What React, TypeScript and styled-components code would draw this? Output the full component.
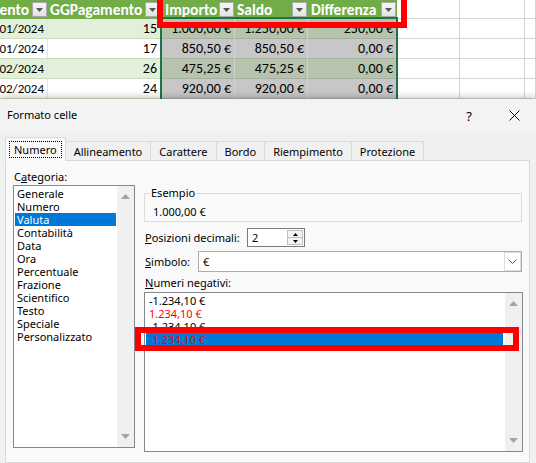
import React from "react";
import styled, { createGlobalStyle } from "styled-components";

const GlobalStyle = createGlobalStyle`
  html, body { margin: 0; padding: 0; }
  body { width: 536px; height: 463px; overflow: hidden; background: #f0f0f0; }
  * { box-sizing: border-box; }
`;

type Tone = "band" | "plain" | "selBand" | "selPlain" | "grid";

const toneBg: Record<Tone, string> = {
  band: "#e2efda",
  plain: "#ffffff",
  selBand: "#b7c3ac",
  selPlain: "#c7c7c7",
  grid: "#ffffff",
};

const toneLine: Record<Tone, string> = {
  band: "#c9dcbc",
  plain: "#c9dcbc",
  selBand: "#a7b19f",
  selPlain: "#a7b19f",
  grid: "#d4d4d4",
};

const toneSide: Record<Tone, string> = {
  band: "#e3e8df",
  plain: "#e3e8df",
  selBand: "#d0d4cc",
  selPlain: "#d0d4cc",
  grid: "#d4d4d4",
};

const Page = styled.div`
  position: relative;
  width: 536px;
  height: 463px;
  overflow: hidden;
  display: flex;
  flex-direction: column;
`;

const Sheet = styled.div`
  position: relative;
  display: grid;
  grid-template-columns: 48px 113px 74px 73px 89px 63px 65px 1fr;
  grid-template-rows: 19px repeat(4, 20px);
  font-family: Calibri, Carlito, Lato, sans-serif;
  font-size: 14px;
  color: #000;
  background: #fff;
  flex: none;
`;

const Cell = styled.div<{ $tone: Tone; $small?: boolean }>`
  display: flex;
  align-items: center;
  justify-content: flex-end;
  overflow: hidden;
  white-space: nowrap;
  padding: 0 3px 0 0;
  font-size: ${(p) => (p.$small ? 13 : 14)}px;
  background: ${(p) => toneBg[p.$tone]};
  border-bottom: 1px solid ${(p) => toneLine[p.$tone]};
  border-right: 1px solid ${(p) => toneSide[p.$tone]};
`;

const HeadCell = styled.div<{ $pad: number }>`
  display: flex;
  align-items: center;
  overflow: hidden;
  white-space: nowrap;
  padding: 0 1px 0 ${(p) => p.$pad}px;
  background: #70ad47;
  color: #fff;
  font-weight: 700;
  font-size: 15.5px;
`;

const HeadLabel = styled.div<{ $clipLeft?: boolean }>`
  flex: 1;
  min-width: 0;
  overflow: hidden;
  display: flex;
  justify-content: ${(p) => (p.$clipLeft ? "flex-end" : "flex-start")};
  padding-right: ${(p) => (p.$clipLeft ? 3 : 0)}px;
`;

const FilterButton = styled.div`
  flex: none;
  width: 15px;
  height: 15px;
  border: 1px solid #a9a9a9;
  background: linear-gradient(#f7f7f7, #e2e2e2);
  display: flex;
  align-items: center;
  justify-content: center;
`;

const SelectionFrame = styled.div`
  position: absolute;
  left: 160px;
  top: 17px;
  width: 238px;
  height: 86px;
  border: 2px solid #217346;
  z-index: 1;
  pointer-events: none;
`;

const Dialog = styled.div`
  position: relative;
  z-index: 2;
  flex: 1;
  display: flex;
  flex-direction: column;
  background: #f0f0f0;
  box-shadow: 0 -3px 6px rgba(0, 0, 0, 0.18);
  font-family: "Segoe UI", "Noto Sans", sans-serif;
  font-size: 11px;
  color: #000;
`;

const TitleBar = styled.div`
  height: 33px;
  display: flex;
  align-items: center;
  padding-left: 7px;
  background: #f3f3f3;
`;

const Title = styled.div`
  flex: 1;
  padding-bottom: 2px;
`;

const TitleButton = styled.div<{ $w: number }>`
  width: ${(p) => p.$w}px;
  height: 33px;
  display: flex;
  align-items: center;
  justify-content: center;
  font-size: 13px;
`;

const TabStrip = styled.div`
  position: relative;
  z-index: 1;
  height: 28px;
  display: flex;
  align-items: flex-end;
  padding-left: 5px;
`;

const Tab = styled.div<{ $active?: boolean }>`
  height: ${(p) => (p.$active ? 24 : 19)}px;
  margin-bottom: ${(p) => (p.$active ? -1 : 0)}px;
  margin-left: -1px;
  padding: 0 ${(p) => (p.$active ? 3 : 8)}px;
  display: flex;
  align-items: center;
  border: 1px solid #dadada;
  border-bottom: none;
  background: ${(p) => (p.$active ? "#f9f9f9" : "#f0f0f0")};
  &:first-child {
    margin-left: 0;
  }
`;

const FocusRect = styled.span`
  padding: 0 4px;
  line-height: 15px;
  border: 1px dotted #000;
`;

const Panel = styled.div`
  flex: 1;
  margin: 0 6px 0 5px;
  border: 1px solid #d9d9d9;
  background: #f9f9f9;
  display: grid;
  grid-template-columns: 122px 379px;
  column-gap: 9px;
  align-items: start;
  padding: 8px 6px 0 7px;
`;

const Column = styled.div`
  display: flex;
  flex-direction: column;
`;

const Label = styled.div<{ $w?: number; $indent?: number }>`
  flex: none;
  line-height: 16px;
  height: 16px;
  width: ${(p) => (p.$w ? `${p.$w}px` : "auto")};
  padding-left: ${(p) => p.$indent ?? 0}px;
  white-space: nowrap;
`;

const ListBox = styled.div<{ $h: number; $mt?: number }>`
  height: ${(p) => p.$h}px;
  margin-top: ${(p) => p.$mt ?? 0}px;
  border: 1px solid #828790;
  background: #fff;
  display: flex;
`;

const ListItems = styled.div<{ $top: number }>`
  flex: 1;
  padding-top: ${(p) => p.$top}px;
  overflow: hidden;
`;

const ListItem = styled.div<{ $selected?: boolean; $red?: boolean; $pad: number; $mr: number }>`
  height: 13px;
  line-height: 13px;
  margin: 0 ${(p) => p.$mr}px 0 1px;
  padding-left: ${(p) => p.$pad}px;
  white-space: nowrap;
  background: ${(p) => (p.$selected ? "#0078d7" : "transparent")};
  color: ${(p) => (p.$red ? "#ff0000" : p.$selected ? "#fff" : "#000")};
`;

const ScrollTrack = styled.div`
  width: 17px;
  flex: none;
  background: #f0f0f0;
  display: flex;
  flex-direction: column;
  justify-content: space-between;
  align-items: center;
  padding: 8px 0;
`;

const Group = styled.fieldset`
  margin: 16px 1px 0 0;
  padding: 3px 8px 1px 8px;
  border: 1px solid #dcdcdc;
  min-width: 0;
  line-height: 16px;
`;

const GroupLegend = styled.legend`
  margin-left: -3px;
  padding: 0 1px;
  line-height: 16px;
`;

const FieldRow = styled.div<{ $mt: number; $h: number }>`
  margin-top: ${(p) => p.$mt}px;
  height: ${(p) => p.$h}px;
  display: flex;
  align-items: center;
`;

const SpinBox = styled.div`
  width: 58px;
  height: 19px;
  border: 1px solid #7a7a7a;
  background: #fff;
  display: flex;
  align-items: stretch;
`;

const SpinValue = styled.div`
  flex: 1;
  padding-left: 4px;
  display: flex;
  align-items: center;
`;

const SpinButtons = styled.div`
  width: 16px;
  margin: 1px 1px 1px 0;
  display: flex;
  flex-direction: column;
`;

const SpinHalf = styled.div`
  flex: 1;
  border: 1px solid #bfbfbf;
  background: #f4f4f4;
  display: flex;
  align-items: center;
  justify-content: center;
  & + & {
    border-top: none;
  }
`;

const Combo = styled.div`
  flex: 1;
  height: 21px;
  margin-right: 1px;
  border: 1px solid #adadad;
  background: #fff;
  display: flex;
`;

const ComboValue = styled.div`
  flex: 1;
  padding-left: 4px;
  display: flex;
  align-items: center;
`;

const ComboButton = styled.div`
  width: 17px;
  border: 1px solid #dcdcdc;
  display: flex;
  align-items: center;
  justify-content: center;
`;

const Marker = styled.div<{ $x: number; $y: number; $w: number; $h: number }>`
  position: absolute;
  left: ${(p) => p.$x}px;
  top: ${(p) => p.$y}px;
  width: ${(p) => p.$w}px;
  height: ${(p) => p.$h}px;
  border: 6px solid #ff0000;
  z-index: 5;
  pointer-events: none;
`;

const Arrow = ({ down, color = "#a3a3a3", w = 9, h = 5 }: { down?: boolean; color?: string; w?: number; h?: number }) => (
  <svg width={w} height={h} viewBox={`0 0 ${w} ${h}`}>
    <polygon points={down ? `0,0 ${w},0 ${w / 2},${h}` : `0,${h} ${w},${h} ${w / 2},0`} fill={color} />
  </svg>
);

const headers = [
  { label: "ento", pad: 0, clip: true },
  { label: "GGPagamento", pad: 2 },
  { label: "Importo", pad: 4 },
  { label: "Saldo", pad: 2 },
  { label: "Differenza", pad: 3 },
];

const rows = [
  { date: "15/01/2024", gg: "15", imp: "1.000,00 €", saldo: "1.250,00 €", diff: "250,00 €" },
  { date: "31/01/2024", gg: "17", imp: "850,50 €", saldo: "850,50 €", diff: "0,00 €" },
  { date: "15/02/2024", gg: "26", imp: "475,25 €", saldo: "475,25 €", diff: "0,00 €" },
  { date: "28/02/2024", gg: "24", imp: "920,00 €", saldo: "920,00 €", diff: "0,00 €" },
];

const categories = [
  "Generale",
  "Numero",
  "Valuta",
  "Contabilità",
  "Data",
  "Ora",
  "Percentuale",
  "Frazione",
  "Scientifico",
  "Testo",
  "Speciale",
  "Personalizzato",
];

const negatives = [
  { text: "-1.234,10 €", red: false },
  { text: "1.234,10 €", red: true },
  { text: "-1.234,10 €", red: false },
  { text: "-1.234,10 €", red: true, selected: true },
];

const tabs = ["Numero", "Allineamento", "Carattere", "Bordo", "Riempimento", "Protezione"];

export default function App() {
  return (
    <Page>
      <GlobalStyle />
      <Sheet>
        {headers.map((h) => (
          <HeadCell key={h.label} $pad={h.pad}>
            <HeadLabel $clipLeft={h.clip}>{h.label}</HeadLabel>
            <FilterButton>
              <Arrow down color="#555" w={7} h={4} />
            </FilterButton>
          </HeadCell>
        ))}
        <Cell $tone="grid" />
        <Cell $tone="grid" />
        <Cell $tone="grid" />
        {rows.map((r, i) => {
          const band = i % 2 === 0;
          const base: Tone = band ? "band" : "plain";
          const sel: Tone = band ? "selBand" : "selPlain";
          return (
            <React.Fragment key={i}>
              <Cell $tone={base} $small>{r.date}</Cell>
              <Cell $tone={base}>{r.gg}</Cell>
              <Cell $tone={sel}>{r.imp}</Cell>
              <Cell $tone={sel}>{r.saldo}</Cell>
              <Cell $tone={sel}>{r.diff}</Cell>
              <Cell $tone="grid" />
              <Cell $tone="grid" />
              <Cell $tone="grid" />
            </React.Fragment>
          );
        })}
        <SelectionFrame />
      </Sheet>

      <Dialog>
        <TitleBar>
          <Title>Formato celle</Title>
          <TitleButton $w={46}>?</TitleButton>
          <TitleButton $w={44}>
            <svg width="11" height="11" viewBox="0 0 11 11">
              <path d="M0.5 0.5 L10.5 10.5 M10.5 0.5 L0.5 10.5" stroke="#000" strokeWidth="1" />
            </svg>
          </TitleButton>
        </TitleBar>

        <TabStrip>
          {tabs.map((t, i) =>
            i === 0 ? (
              <Tab key={t} $active>
                <FocusRect>{t}</FocusRect>
              </Tab>
            ) : (
              <Tab key={t}>{t}</Tab>
            )
          )}
        </TabStrip>

        <Panel>
          <Column>
            <Label $indent={1}>
              C<u>a</u>tegoria:
            </Label>
            <ListBox $h={263}>
              <ListItems $top={1}>
                {categories.map((c) => (
                  <ListItem key={c} $pad={2} $mr={1} $selected={c === "Valuta"}>
                    {c}
                  </ListItem>
                ))}
              </ListItems>
              <ScrollTrack>
                <Arrow />
                <Arrow down />
              </ScrollTrack>
            </ListBox>
          </Column>

          <Column>
            <Group>
              <GroupLegend>Esempio</GroupLegend>
              1.000,00 €
            </Group>

            <FieldRow $mt={6} $h={19}>
              <Label $w={103} $indent={1}>
                <u>P</u>osizioni decimali:
              </Label>
              <SpinBox>
                <SpinValue>2</SpinValue>
                <SpinButtons>
                  <SpinHalf>
                    <Arrow color="#000" w={5} h={3} />
                  </SpinHalf>
                  <SpinHalf>
                    <Arrow down color="#000" w={5} h={3} />
                  </SpinHalf>
                </SpinButtons>
              </SpinBox>
            </FieldRow>

            <FieldRow $mt={4} $h={21}>
              <Label $w={54} $indent={1}>
                <u>S</u>imbolo:
              </Label>
              <Combo>
                <ComboValue>€</ComboValue>
                <ComboButton>
                  <svg width="9" height="5" viewBox="0 0 9 5">
                    <path d="M0.5 0.5 L4.5 4.5 L8.5 0.5" stroke="#555" strokeWidth="1" fill="none" />
                  </svg>
                </ComboButton>
              </Combo>
            </FieldRow>

            <FieldRow $mt={3} $h={16}>
              <Label $indent={1}>
                <u>N</u>umeri negativi:
              </Label>
            </FieldRow>

            <ListBox $h={160} $mt={1}>
              <ListItems $top={1}>
                {negatives.map((n, i) => (
                  <ListItem key={i} $pad={3} $mr={2} $red={n.red} $selected={n.selected}>
                    {n.text}
                  </ListItem>
                ))}
              </ListItems>
              <ScrollTrack>
                <Arrow />
                <Arrow down />
              </ScrollTrack>
            </ListBox>
          </Column>
        </Panel>
      </Dialog>

      <Marker $x={157} $y={-10} $w={250} $h={38} />
      <Marker $x={135} $y={327} $w={384} $h={24} />
    </Page>
  );
}
